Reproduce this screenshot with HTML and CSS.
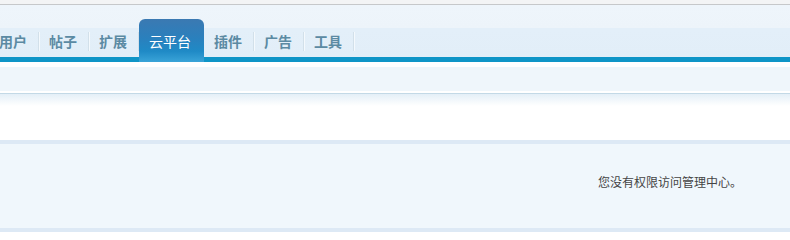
FILE: index.html
```html
<!DOCTYPE html>
<html lang="zh-CN">
<head>
<meta charset="utf-8">
<title>管理中心</title>
<link rel="stylesheet" href="styles.css">
</head>
<body>
<div class="topstrip"></div>
<div class="header">
  <ul class="nav">
    <li><a>用户</a></li>
    <li><a>帖子</a></li>
    <li><a>扩展</a></li>
    <li class="active"><a>云平台</a></li>
    <li><a>插件</a></li>
    <li><a>广告</a></li>
    <li><a>工具</a></li>
  </ul>
</div>
<div class="subbar"></div>
<div class="shadow"></div>
<div class="notice">
  <p class="msg">您没有权限访问管理中心。</p>
</div>
</body>
</html>
```
FILE: styles.css
```css
html, body {
  margin: 0;
  padding: 0;
  background: #ffffff;
  font-family: "Noto Sans CJK SC", "Liberation Sans", sans-serif;
}

.topstrip {
  height: 4px;
  background: #f3f4f5;
  border-bottom: 1px solid #c6c8ca;
}

.header {
  height: 52px;
  background: linear-gradient(#eef5fb 0, #edf4fa 45%, #e3eff9 45%, #e2eef8 100%);
  border-bottom: 5px solid #0f95c7;
  display: flex;
  align-items: flex-end;
}

.nav {
  list-style: none;
  margin: 0 0 0 -11px;
  padding: 0;
  display: flex;
  align-items: flex-end;
}

.nav li {
  display: flex;
  align-items: center;
  height: 30px;
  padding-bottom: 2px;
  box-sizing: border-box;
}

.nav li::after {
  content: "";
  width: 1px;
  height: 19px;
  background: #d2e0ea;
  box-shadow: 1px 0 0 #f4f9fd;
}

.nav a {
  display: block;
  padding: 0 11px 0 10px;
  font-size: 14px;
  line-height: 20px;
  font-weight: bold;
  color: #5b8aa3;
}

.nav li.active {
  height: 43px;
  margin-bottom: -5px;
  padding-bottom: 0;
  border-radius: 6px 6px 0 0;
  background: linear-gradient(#3b79b2 0, #2a80bd 45%, #1f8ac6 75%, #3aa4d8 100%);
}

.nav li.active::after {
  display: none;
}

.nav li.active a {
  padding: 0 13px 0 10px;
  color: #ffffff;
  font-weight: normal;
}

.subbar {
  margin-top: 5px;
  height: 24px;
  background: #eff6fb;
  border-bottom: 2px solid #ffffff;
}

.shadow {
  height: 12px;
  border-top: 1px solid #c3d9e6;
  background: linear-gradient(#e4eff7, #ffffff);
}

.notice {
  margin-top: 34px;
  height: 84px;
  background: #f0f7fc;
  border-top: 4px solid #dde9f5;
  border-bottom: 4px solid #dde9f5;
  display: flex;
  justify-content: flex-end;
  align-items: flex-start;
}

.msg {
  margin: 28px 48px 0 0;
  font-size: 12px;
  line-height: 20px;
  color: #444444;
}
```
